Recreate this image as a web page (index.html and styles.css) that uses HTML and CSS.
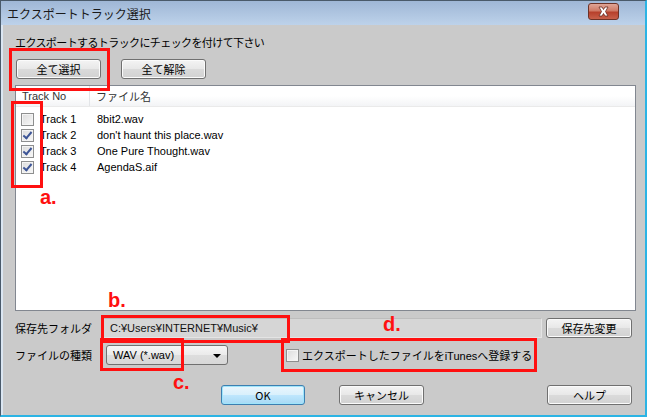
FILE: index.html
```html
<!DOCTYPE html>
<html lang="ja">
<head>
    <meta charset="UTF-8">
    <title>エクスポートトラック選択</title>
    <link rel="stylesheet" href="styles.css">
</head>
<body>
    <div class="window">
        <div class="titlebar">
            <span class="title">エクスポートトラック選択</span>
            <div class="close-btn">
                <svg width="31" height="17" viewBox="0 0 31 17">
                    <path d="M11 4 L14 4 L15.5 6.5 L17 4 L20 4 L17.5 8.5 L20 13 L17 13 L15.5 10.5 L14 13 L11 13 L13.5 8.5 Z" fill="#fff" stroke="#6a2a20" stroke-width="0.8"/>
                </svg>
            </div>
        </div>
        <div class="content">
            <div class="hint">エクスポートするトラックにチェックを付けて下さい</div>
            <div class="top-buttons">
                <div class="btn">全て選択</div>
                <div class="btn">全て解除</div>
            </div>
            <div class="list">
                <div class="list-head">
                    <div class="col-no">Track No</div>
                    <div class="col-name">ファイル名</div>
                </div>
                <div class="rows">
                    <div class="row"><span class="check"></span><span class="no">Track 1</span><span class="name">8bit2.wav</span></div>
                    <div class="row"><span class="check on"></span><span class="no">Track 2</span><span class="name">don't haunt this place.wav</span></div>
                    <div class="row"><span class="check on"></span><span class="no">Track 3</span><span class="name">One Pure Thought.wav</span></div>
                    <div class="row"><span class="check on"></span><span class="no">Track 4</span><span class="name">AgendaS.aif</span></div>
                </div>
            </div>
            <div class="field-row">
                <div class="label">保存先フォルダ</div>
                <div class="textbox">C:¥Users¥INTERNET¥Music¥</div>
                <div class="btn btn-change">保存先変更</div>
            </div>
            <div class="field-row">
                <div class="label">ファイルの種類</div>
                <div class="select">WAV (*.wav)<span class="arrow"></span></div>
                <div class="itunes"><span class="check"></span>エクスポートしたファイルをiTunesへ登録する</div>
            </div>
            <div class="bottom-buttons">
                <div class="btn btn-ok">OK</div>
                <div class="btn btn-cancel">キャンセル</div>
                <div class="btn btn-help">ヘルプ</div>
            </div>
        </div>

        <div class="mark box-1"></div>
        <div class="mark box-a"></div>
        <div class="mark box-b"></div>
        <div class="mark box-c"></div>
        <div class="mark box-d"></div>
        <div class="tag tag-a">a.</div>
        <div class="tag tag-b">b.</div>
        <div class="tag tag-c">c.</div>
        <div class="tag tag-d">d.</div>
    </div>
</body>
</html>
```

FILE: styles.css
```css
body {
    margin: 0;
    width: 648px;
    height: 418px;
    overflow: hidden;
    background: #fff;
    font-family: "Liberation Sans", "Noto Sans CJK JP", sans-serif;
    font-size: 11px;
    color: #000;
}
.window {
    position: relative;
    width: 644px;
    height: 414px;
    background: #cacaca;
    border-left: 1px solid #4a5a6a;
    border-top: 1px solid #4a5a6a;
    border-right: 2px solid #2cb4e4;
    border-bottom: 2px solid #2cb4e4;
    box-shadow: inset 2px 0 0 #dbe6f2;
    display: flex;
    flex-direction: column;
}
.titlebar {
    height: 24px;
    background: linear-gradient(#9fb7d6, #bdd2ea);
    display: flex;
    align-items: center;
    justify-content: space-between;
    padding: 0 26px 0 6px;
}
.title {
    font-family: "Noto Sans CJK JP", sans-serif;
    font-size: 12px;
    color: #1a1a1a;
}
.close-btn {
    width: 29px;
    height: 15px;
    margin-top: -4px;
    border: 1px solid #6d3226;
    border-radius: 3px;
    background: linear-gradient(#e0a596 0%, #cf7a66 45%, #b7402b 55%, #c8604a 100%);
    display: flex;
    align-items: center;
    justify-content: center;
    overflow: hidden;
}
.close-btn svg {
    flex: none;
}
.content {
    padding: 0 9px 0 14px;
    display: flex;
    flex-direction: column;
}
.hint {
    font-family: "Noto Sans CJK JP", sans-serif;
    margin-top: 10px;
    line-height: 14px;
    letter-spacing: -0.6px;
}
.top-buttons {
    display: flex;
    gap: 20px;
    margin-top: 10px;
    margin-left: 1px;
}
.btn {
    width: 83px;
    height: 18px;
    border: 1px solid #707070;
    border-radius: 3px;
    background: linear-gradient(#f4f4f4 0%, #e8e8e8 48%, #dadada 52%, #d2d2d2 100%);
    box-shadow: inset 0 0 0 1px #fbfbfb;
    display: flex;
    align-items: center;
    justify-content: center;
    font-family: "Noto Sans CJK JP", sans-serif;
}
.list {
    margin-top: 6px;
    width: 619px;
    height: 224px;
    background: #fff;
    border: 1px solid #828790;
}
.list-head {
    height: 20px;
    display: flex;
    align-items: center;
    background: linear-gradient(#fff 0%, #fff 50%, #f3f4f6 100%);
    border-bottom: 1px solid #eaeaea;
    color: #333;
}
.col-no {
    width: 67px;
    padding-left: 6px;
    height: 20px;
    line-height: 20px;
    border-right: 1px solid #e3e5e8;
}
.col-name {
    padding-left: 6px;
    font-family: "Noto Sans CJK JP", sans-serif;
}
.rows {
    padding-top: 4px;
}
.row {
    height: 16px;
    display: flex;
    align-items: center;
    padding-left: 5px;
}
.check {
    width: 11px;
    height: 11px;
    border: 1px solid #8e8f8f;
    background: linear-gradient(135deg, #dcdcdc, #f8f8f8);
    box-shadow: inset 0 0 0 1px #f4f4f4;
    flex: none;
    position: relative;
}
.check.on::after {
    content: "";
    position: absolute;
    left: 3px;
    top: 0px;
    width: 3px;
    height: 7px;
    border-right: 2px solid #3d5596;
    border-bottom: 2px solid #3d5596;
    transform: rotate(40deg);
}
.no {
    width: 57px;
    margin-left: 6px;
}
.field-row {
    display: flex;
    align-items: center;
    height: 20px;
    margin-top: 7px;
}
.label {
    width: 88px;
    font-family: "Noto Sans CJK JP", sans-serif;
    flex: none;
}
.textbox {
    width: 431px;
    height: 18px;
    line-height: 18px;
    padding-left: 6px;
    background: #d6d6d6;
    border: 1px solid #e4e4e4;
    border-top-color: #bdbdbd;
    border-left-color: #bdbdbd;
    color: #111;
}
.btn-change {
    margin-left: 4px;
    width: 84px;
}
.select {
    margin-left: 3px;
    width: 114px;
    height: 18px;
    padding-left: 6px;
    border: 1px solid #707070;
    border-radius: 3px;
    background: linear-gradient(#f6f6f6 0%, #ebebeb 48%, #dddddd 52%, #d8d8d8 100%);
    display: flex;
    align-items: center;
    position: relative;
}
.arrow {
    position: absolute;
    right: 6px;
    top: 8px;
    border-left: 4px solid transparent;
    border-right: 4px solid transparent;
    border-top: 4px solid #000;
}
.itunes {
    margin-left: 58px;
    display: flex;
    align-items: center;
    gap: 3px;
}
.bottom-buttons {
    display: flex;
    margin-top: 20px;
    padding-left: 206px;
}
.btn-ok {
    width: 82px;
    border-color: #3c7fb1;
    background: linear-gradient(#eaf6fd 0%, #d9f0fc 48%, #bee6fd 52%, #a7d9f5 100%);
    box-shadow: inset 0 0 0 1px #9fe5fb;
}
.btn-cancel {
    margin-left: 34px;
}
.btn-help {
    margin-left: 123px;
}
.mark {
    position: absolute;
    border: 3px solid #ff1010;
    box-sizing: border-box;
}
.box-1 { left: 8px; top: 47px; width: 101px; height: 43px; }
.box-a { left: 10px; top: 100px; width: 32px; height: 87px; }
.box-b { left: 100px; top: 314px; width: 189px; height: 28px; }
.box-c { left: 99px; top: 337px; width: 84px; height: 33px; }
.box-d { left: 280px; top: 337px; width: 256px; height: 34px; }
.tag {
    position: absolute;
    font-family: "Liberation Sans", sans-serif;
    font-weight: bold;
    font-size: 20px;
    color: #ff1010;
    line-height: 20px;
}
.tag-a { left: 39px; top: 186px; }
.tag-b { left: 107px; top: 289px; }
.tag-c { left: 172px; top: 371px; }
.tag-d { left: 382px; top: 313px; }
```
